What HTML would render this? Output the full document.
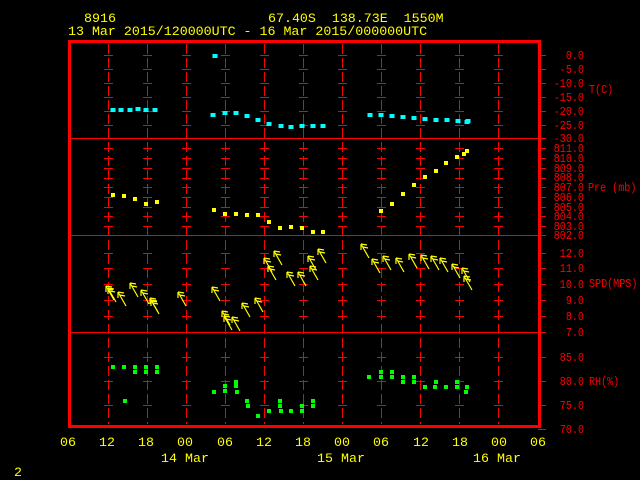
<!DOCTYPE html>
<html><head><meta charset="utf-8"><style>
html,body{margin:0;padding:0;background:#000;width:640px;height:480px;overflow:hidden}
svg{display:block}
text{font-family:"Liberation Mono","DejaVu Sans Mono",monospace;font-size:13.3px}
.r text{font-size:12px;transform-box:fill-box;transform:scaleX(0.84)}
.r.e text{transform-origin:right center}
.r.s text{transform-origin:left center}
.y{fill:#ff0}.r{fill:#f00}
</style></head><body>
<svg id="s" width="640" height="480" xmlns="http://www.w3.org/2000/svg">
<g id="g"></g>
<rect x="69.5" y="41.5" width="470" height="385" fill="none" stroke="#f00" stroke-width="3"/>
<line x1="69" y1="138.5" x2="546" y2="138.5" stroke="#f00"/>
<line x1="69" y1="235.5" x2="546" y2="235.5" stroke="#f00"/>
<line x1="69" y1="332.5" x2="546" y2="332.5" stroke="#f00"/>
<text class="y" x="84" y="22">8916</text>
<text class="y" x="268" y="22" xml:space="preserve">67.40S  138.73E  1550M</text>
<text class="y" x="68" y="35">13 Mar 2015/120000UTC - 16 Mar 2015/000000UTC</text>
<g class="r e" text-anchor="end">
<text x="584" y="59">0.0</text><text x="584" y="73">-5.0</text><text x="584" y="87">-10.0</text><text x="584" y="101">-15.0</text><text x="584" y="115">-20.0</text><text x="584" y="129">-25.0</text><text x="584" y="142">-30.0</text>
<text x="584" y="152">811.0</text><text x="584" y="162">810.0</text><text x="584" y="172">809.0</text><text x="584" y="181">808.0</text><text x="584" y="191">807.0</text><text x="584" y="201">806.0</text><text x="584" y="211">805.0</text><text x="584" y="220">804.0</text><text x="584" y="230">803.0</text><text x="584" y="239">802.0</text>
<text x="584" y="257">12.0</text><text x="584" y="272">11.0</text><text x="584" y="288">10.0</text><text x="584" y="304">9.0</text><text x="584" y="320">8.0</text><text x="584" y="336">7.0</text>
<text x="584" y="361">85.0</text><text x="584" y="385">80.0</text><text x="584" y="409">75.0</text><text x="584" y="433">70.0</text>
</g>
<g class="r s">
<text x="589" y="93">T(C)</text><text x="588" y="191">Pre (mb)</text><text x="589" y="287">SPD(MPS)</text><text x="589" y="385">RH(%)</text>
</g>
<g class="y" text-anchor="middle">
<text x="68" y="446">06</text><text x="107" y="446">12</text><text x="146" y="446">18</text><text x="185" y="446">00</text><text x="225" y="446">06</text><text x="264" y="446">12</text><text x="303" y="446">18</text><text x="342" y="446">00</text><text x="381" y="446">06</text><text x="421" y="446">12</text><text x="460" y="446">18</text><text x="499" y="446">00</text><text x="538" y="446">06</text>
<text x="185" y="462">14 Mar</text><text x="341" y="462">15 Mar</text><text x="497" y="462">16 Mar</text>
</g>
<text class="y" x="14" y="476">2</text>
</svg>
<script>
var NS="http://www.w3.org/2000/svg",g=document.getElementById('g');
function el(t,a){var e=document.createElementNS(NS,t);for(var k in a)e.setAttribute(k,a[k]);g.appendChild(e);return e;}
var xs=[108,147,186,225,264,303,342,381,420,459,498];
var ys=[55,69,83,97,111,125,148,158,168,178,187,197,207,216,226,253,268,284,300,316,357,381,405];
xs.forEach(function(x){
 el('line',{x1:x+.5,y1:44,x2:x+.5,y2:424,stroke:'#f00','stroke-dasharray':'10,4'});
 ys.forEach(function(y){el('line',{x1:x-4,y1:y+.5,x2:x+5,y2:y+.5,stroke:'#f00'});});
});
ys.concat([138,235,332,429]).forEach(function(y){el('line',{x1:538,y1:y+.5,x2:546,y2:y+.5,stroke:'#f00'});});
function sq(p,c,w,h){for(var i=0;i<p.length;i+=2)el('rect',{x:p[i]-w/2,y:p[i+1]-h/2,width:w,height:h,fill:c});}
sq([113,110,121,110,130,110,138,109,146,110,155,110,215,56,213,115,225,113,236,113,247,116,258,120,269,124,281,126,291,127,302,126,313,126,323,126,370,115,381,115,392,116,403,117,414,118,425,119,436,120,447,120,458,121,467,122,468,121],'#0ff',5,4);
sq([113,195,124,196,135,199,146,204,157,202,214,210,225,214,236,214,247,215,258,215,269,222,280,228,291,227,302,228,313,232,323,232,381,211,392,204,403,194,414,185,425,177,436,171,446,163,457,157,464,154,467,151],'#ff0',4,4);
sq([113,367,124,367,135,367,135,372,146,367,146,372,157,367,157,372,125,401,214,392,225,386,225,391,236,382,236,386,237,392,247,401,248,406,258,416,269,411,280,406,280,401,281,411,291,411,302,406,302,411,313,401,313,406,369,377,381,372,381,377,392,372,392,377,403,377,403,382,414,377,414,382,425,387,435,387,436,382,446,387,457,382,457,387,467,387,466,392],'#0f0',4,4);
var w=[108,288,118,292,130,283,141,290,150,298,212,287,222,311,232,317,242,303,255,298,264,258,274,251,287,272,298,272,308,256,318,249,361,244,372,259,383,256,396,258,409,254,421,255,431,256,440,258,452,264,462,268,106,286,178,292,151,300,268,266,224,316,310,266,464,276];
for(var i=0;i<w.length;i+=2){var x=w[i],y=w[i+1];
 el('path',{d:'M'+x+' '+y+'L'+(x+8)+' '+(y+14)+'M'+x+' '+y+'L'+(x+6)+' '+(y+1)+'M'+x+' '+y+'L'+(x)+' '+(y+6)+'M'+(x+2)+' '+(y+3)+'L'+(x+7)+' '+(y+4),stroke:'#ff0',fill:'none','stroke-width':1.2});}
</script>
</body></html>
